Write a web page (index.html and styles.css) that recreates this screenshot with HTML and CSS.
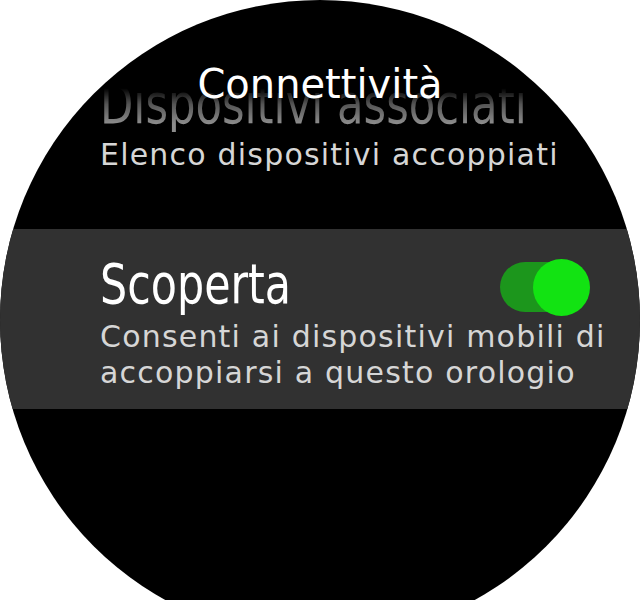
FILE: index.html
```html
<!DOCTYPE html>
<html lang="it">
<head>
<meta charset="utf-8">
<title>Connettività</title>
<link rel="stylesheet" href="styles.css">
</head>
<body>
<div class="watch">
  <div class="title">Connettività</div>
  <div class="item prev">
    <div class="item-name faded"><span class="narrow">Dispositivi associati</span></div>
    <div class="item-desc">Elenco dispositivi accoppiati</div>
  </div>
  <div class="item selected">
    <div class="item-row">
      <div class="item-name"><span class="narrow">Scoperta</span></div>
      <div class="toggle">
        <div class="track"></div>
        <div class="knob"></div>
      </div>
    </div>
    <div class="item-desc">Consenti ai dispositivi mobili di<br>accoppiarsi a questo orologio</div>
  </div>
</div>
</body>
</html>
```
FILE: styles.css
```css
html, body {
  margin: 0;
  padding: 0;
  background: #ffffff;
  overflow: hidden;
}
.watch {
  width: 640px;
  height: 640px;
  border-radius: 50%;
  background: #000000;
  overflow: hidden;
  display: flex;
  flex-direction: column;
}
.title {
  position: relative;
  z-index: 1;
  margin-top: 60px;
  height: 48px;
  line-height: 48px;
  text-align: center;
  color: #ffffff;
  font-family: "DejaVu Sans", sans-serif;
  font-size: 40px;
}
.item {
  padding-left: 100px;
  padding-right: 50px;
}
.prev {
  margin-top: -32px;
  height: 153px;
  flex-shrink: 0;
}
.item-name {
  font-family: "DejaVu Sans Condensed", "DejaVu Sans", sans-serif;
  font-size: 56px;
  line-height: 56px;
  height: 56px;
  color: #ffffff;
  white-space: nowrap;
}
.narrow {
  display: inline-block;
  transform: scaleX(0.85);
  transform-origin: left center;
}
.faded {
  color: #8c8c8c;
  -webkit-mask-image: linear-gradient(to bottom, transparent 0%, transparent 22%, rgba(0,0,0,0.6) 50%, #000 85%);
  mask-image: linear-gradient(to bottom, transparent 0%, transparent 22%, rgba(0,0,0,0.6) 50%, #000 85%);
}
.faded .narrow {
  transform: scaleX(0.86);
}
.item-desc {
  font-family: "DejaVu Sans", sans-serif;
  font-size: 30px;
  line-height: 36px;
  letter-spacing: 1.2px;
  color: #d6d6d6;
  white-space: nowrap;
  margin-top: 5px;
}
.selected {
  background: #313131;
  height: 180px;
  flex-shrink: 0;
  box-sizing: border-box;
  padding-top: 26.6px;
}
.item-row {
  display: flex;
  justify-content: space-between;
  align-items: flex-start;
  height: 56px;
}
.selected .item-desc {
  margin-top: 7px;
}
.toggle {
  display: flex;
  align-items: center;
  margin-top: 3px;
  height: 57px;
}
.track {
  width: 75px;
  height: 50px;
  border-radius: 25px;
  background: #1c961c;
}
.knob {
  width: 57px;
  height: 57px;
  border-radius: 50%;
  background: #12e312;
  margin-left: -42px;
}
```
